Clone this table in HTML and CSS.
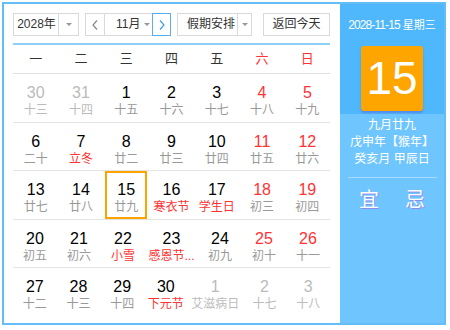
FILE: index.html
```html
<!DOCTYPE html>
<html lang="zh-CN">
<head>
<meta charset="utf-8">
<title>万年历</title>
<link rel="stylesheet" href="styles.css">
</head>
<body>
<div class="cal">
  <div class="main">
    <div class="toolbar">
      <div class="sel sel-year"><span class="sel-text">2028年</span><span class="sel-arrow"><i class="tri"></i></span></div>
      <div class="month-group">
        <span class="nav prev"><svg width="6" height="10" viewBox="0 0 6 10"><polyline points="5,0.5 1,5 5,9.5" fill="none" stroke="#888" stroke-width="1.2"/></svg></span>
        <span class="month"><span class="month-text">11月</span><i class="tri"></i></span>
        <span class="nav next"><svg width="6" height="10" viewBox="0 0 6 10"><polyline points="1,0.5 5,5 1,9.5" fill="none" stroke="#3a9ff0" stroke-width="1.2"/></svg></span>
      </div>
      <div class="sel sel-holiday"><span class="sel-text">假期安排</span><span class="sel-arrow"><i class="tri"></i></span></div>
      <div class="btn-today">返回今天</div>
    </div>
    <div class="week">
      <span>一</span><span>二</span><span>三</span><span>四</span><span>五</span><span class="red">六</span><span class="red">日</span>
    </div>
    <div class="rows">
      <div class="row">
        <div class="cell other"><b>30</b><em>十三</em></div>
        <div class="cell other"><b>31</b><em>十四</em></div>
        <div class="cell"><b>1</b><em>十五</em></div>
        <div class="cell"><b>2</b><em>十六</em></div>
        <div class="cell"><b>3</b><em>十七</em></div>
        <div class="cell wknd"><b>4</b><em>十八</em></div>
        <div class="cell wknd"><b>5</b><em>十九</em></div>
      </div>
      <div class="row">
        <div class="cell"><b>6</b><em>二十</em></div>
        <div class="cell fest"><b>7</b><em>立冬</em></div>
        <div class="cell"><b>8</b><em>廿二</em></div>
        <div class="cell"><b>9</b><em>廿三</em></div>
        <div class="cell"><b>10</b><em>廿四</em></div>
        <div class="cell wknd"><b>11</b><em>廿五</em></div>
        <div class="cell wknd"><b>12</b><em>廿六</em></div>
      </div>
      <div class="row">
        <div class="cell"><b>13</b><em>廿七</em></div>
        <div class="cell"><b>14</b><em>廿八</em></div>
        <div class="cell selected"><b>15</b><em>廿九</em></div>
        <div class="cell fest"><b>16</b><em>寒衣节</em></div>
        <div class="cell fest"><b>17</b><em>学生日</em></div>
        <div class="cell wknd"><b>18</b><em>初三</em></div>
        <div class="cell wknd"><b>19</b><em>初四</em></div>
      </div>
      <div class="row">
        <div class="cell"><b>20</b><em>初五</em></div>
        <div class="cell"><b>21</b><em>初六</em></div>
        <div class="cell fest"><b>22</b><em>小雪</em></div>
        <div class="cell fest"><b>23</b><em>感恩节...</em></div>
        <div class="cell"><b>24</b><em>初九</em></div>
        <div class="cell wknd"><b>25</b><em>初十</em></div>
        <div class="cell wknd"><b>26</b><em>十一</em></div>
      </div>
      <div class="row">
        <div class="cell"><b>27</b><em>十二</em></div>
        <div class="cell"><b>28</b><em>十三</em></div>
        <div class="cell"><b>29</b><em>十四</em></div>
        <div class="cell fest"><b>30</b><em>下元节</em></div>
        <div class="cell other"><b>1</b><em>艾滋病日</em></div>
        <div class="cell other"><b>2</b><em>十七</em></div>
        <div class="cell other"><b>3</b><em>十八</em></div>
      </div>
    </div>
  </div>
  <div class="side">
    <div class="side-top">
      <div class="side-date"><span class="num">2028-11-15</span> 星期三</div>
      <div class="side-day">15</div>
    </div>
    <div class="side-lunar">
      <div>九月廿九</div>
      <div>戊申年【猴年】</div>
      <div>癸亥月 甲辰日</div>
    </div>
    <div class="side-line"></div>
    <div class="side-yj"><span>宜</span><span>忌</span></div>
  </div>
</div>
</body>
</html>
```

FILE: styles.css
```css
* { box-sizing: border-box; margin: 0; padding: 0; }
html, body { background: #fff; }
body {
  margin: 0;
  font-family: "Liberation Sans", "Noto Sans CJK SC", sans-serif;
  color: #333;
}
.cal {
  margin: 2px;
  width: 444px;
  height: 323px;
  border: 2px solid #64bdf7;
  display: flex;
  background: #fff;
}
.main {
  width: 336px;
  padding: 9px 10px 0 9px;
}
.toolbar {
  display: flex;
  height: 23px;
  font-size: 12px;
  line-height: 21px;
  color: #333;
}
.sel {
  display: flex;
  border: 1px solid #d9d9d9;
  height: 23px;
}
.sel-year { width: 66px; }
.sel-holiday { width: 75px; margin-left: 6px; }
.sel-text { flex: 1; text-align: center; }
.sel-year .sel-text { padding-left: 1px; }
.sel-holiday .sel-text { text-align: left; padding-left: 9px; }
.sel-arrow {
  border-left: 1px solid #d9d9d9;
  display: flex;
  align-items: center;
  justify-content: center;
}
.sel-year .sel-arrow { width: 20px; }
.sel-holiday .sel-arrow { width: 14px; }
.tri {
  display: block;
  width: 0;
  height: 0;
  border-left: 3px solid transparent;
  border-right: 3px solid transparent;
  border-top: 3px solid #999;
}
.month-group {
  display: flex;
  margin-left: 6px;
  width: 86px;
  height: 23px;
}
.nav {
  width: 19px;
  height: 23px;
  display: flex;
  align-items: center;
  justify-content: center;
}
.prev { border: 1px solid #d9d9d9; border-right: none; width: 19px; }
.next { border: 1px solid #5aaef0; }
.month {
  width: 48px;
  border: 1px solid #d9d9d9;
  border-right: none;
  display: flex;
  align-items: center;
  padding-left: 11px;
}
.month-text { width: 28px; }
.btn-today {
  margin-left: 11px;
  width: 67px;
  height: 23px;
  border: 1px solid #d9d9d9;
  text-align: center;
}
.week {
  margin-top: 7px;
  border-top: 2px solid #8fd0f8;
  display: grid;
  grid-template-columns: repeat(7, 1fr);
  height: 31px;
  border-bottom: 1px solid #e0e0e0;
  font-size: 13px;
  line-height: 28px;
  text-align: center;
  color: #333;
}
.week .red { color: #f33; }
.row {
  display: grid;
  grid-template-columns: repeat(7, 1fr);
  height: 48.5px;
  border-bottom: 1px solid #e3e3e3;
}
.row:last-child { border-bottom: none; }
.cell {
  margin: 0 1.5px;
  border: 2px solid transparent;
  padding-top: 7px;
  text-align: center;
}
.cell b {
  display: block;
  font-weight: normal;
  font-size: 16px;
  line-height: 19px;
  color: #000;
}
.cell em {
  display: block;
  font-style: normal;
  font-size: 12px;
  line-height: 16px;
  color: #999;
  white-space: nowrap;
}
.cell.wknd b { color: #f33; }
.cell.fest em { color: #f33; }
.cell.other b { color: #bbb; }
.cell.other em { color: #bbb; }
.cell.selected { border-color: #ffa300; }
.side {
  width: 104px;
  background: #6fc5fd;
  color: #fff;
  text-align: center;
}
.side-top {
  background: #4fb7fb;
  height: 110px;
  padding-top: 13px;
}
.side-date {
  font-size: 11px;
  line-height: 16px;
  white-space: nowrap;
}
.side-date .num {
  font-size: 12px;
  letter-spacing: -0.9px;
}
.side-day {
  margin: 13px auto 0;
  width: 62px;
  height: 65px;
  background: #fea500;
  border-radius: 3px;
  font-size: 46px;
  line-height: 65px;
  box-shadow: 0 2px 2px rgba(90, 90, 210, 0.45);
}
.side-lunar {
  padding-top: 3px;
  font-size: 12px;
  line-height: 17px;
}
.side-line {
  margin: 9px 7px 0 8px;
  height: 1px;
  background: #a6dbff;
}
.side-yj {
  margin-top: 10px;
  display: flex;
  justify-content: center;
  gap: 26px;
  font-size: 20px;
  line-height: 24px;
  text-shadow: 1px 1px 0 #8a8cf0;
}
```
